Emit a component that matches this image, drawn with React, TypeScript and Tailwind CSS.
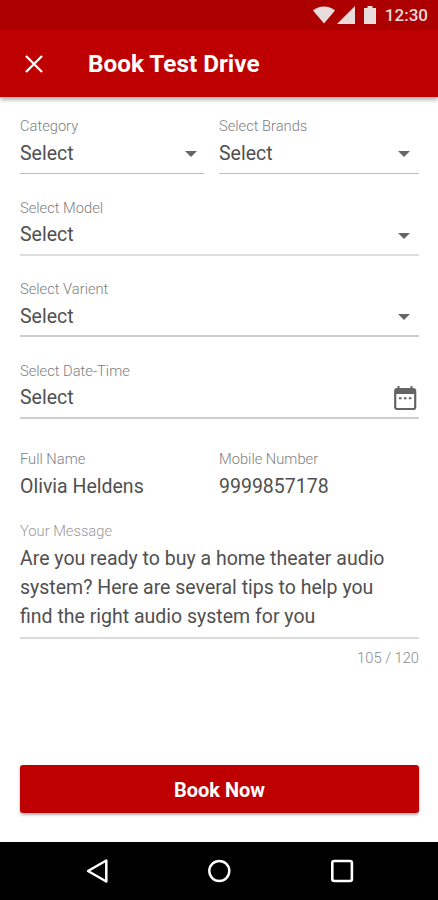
import React from 'react'

type FieldProps = {
  label: string
  value: string
  icon?: React.ReactNode
  lineClass?: string
}

const DropIcon = ({ className = 'mr-[9px]' }: { className?: string }) => (
  <svg width="12" height="6" viewBox="0 0 12 6" className={`mt-px ${className}`} fill="#666666">
    <path d="M0 0h12L6 6z" />
  </svg>
)

const CalendarIcon = () => (
  <svg width="24" height="26" viewBox="0 0 24 26" className="mr-[2px]" fill="none">
    <rect x="2.2" y="4.2" width="20" height="19.8" rx="2" stroke="#646464" strokeWidth="2.2" />
    <path d="M2 4h20v5H2z" fill="#646464" />
    <path d="M5.5 1v4M18.5 1v4" stroke="#646464" strokeWidth="2" />
    <path d="M6 13.3h2.6M10.9 13.3h2.6M15.8 13.3h2.6" stroke="#646464" strokeWidth="2" />
  </svg>
)

const Field = ({ label, value, icon, lineClass = 'h-[1.5px] bg-[#bdbdbd]' }: FieldProps) => (
  <div className="flex h-[58px] flex-col">
    <span className="h-5 text-[14.7px] leading-5 font-light text-[#808080]">{label}</span>
    <div className="flex h-9 items-center justify-between">
      <span className="text-[19.5px] leading-7 text-[#505050]">{value}</span>
      {icon}
    </div>
    <div className={`mt-px shrink-0 ${lineClass}`} />
  </div>
)

const StatusBar = () => (
  <div className="flex h-[30px] items-center justify-end bg-[#ac0000] pr-[10px] text-[#e8dcdc]">
    <svg width="22" height="18" viewBox="0 0 22 18" fill="currentColor">
      <path d="M0 4.5C6 -.7 16 -.7 22 4.5L11 17.5z" />
    </svg>
    <svg width="18" height="18" viewBox="0 0 18 18" className="ml-[2px]" fill="currentColor">
      <path d="M0 18L18 0v18z" />
    </svg>
    <svg width="12" height="18" viewBox="0 0 12 18" className="ml-[9px]" fill="currentColor">
      <path d="M3.5 0h5v2H12v16H0V2h3.5z" />
    </svg>
    <span className="ml-[9px] text-[17px] leading-5 font-medium">12:30</span>
  </div>
)

const AppBar = () => (
  <div className="flex h-[67px] items-center bg-[#bf0000] pl-[25px] text-white shadow-[0_3px_4px_rgba(0,0,0,0.3)]">
    <button className="flex items-center justify-center">
      <svg width="18" height="18" viewBox="0 0 18 18" fill="none" stroke="currentColor" strokeWidth="2.3">
        <path d="M1 1l16 16M17 1L1 17" />
      </svg>
    </button>
    <h1 className="ml-[45px] text-[24.3px] leading-8 font-bold">Book Test Drive</h1>
  </div>
)

const NavigationBar = () => (
  <div className="flex h-[58px] items-center bg-black pl-[85px] text-white">
    <svg width="24" height="26" viewBox="0 0 24 26" fill="none" stroke="currentColor" strokeWidth="2.5" strokeLinejoin="round">
      <path d="M21.3 2.5v21L3 13z" />
    </svg>
    <svg width="24" height="24" viewBox="0 0 24 24" className="ml-[98px]" fill="none" stroke="currentColor" strokeWidth="2.4">
      <circle cx="12.3" cy="12" r="10" />
    </svg>
    <svg width="24" height="24" viewBox="0 0 24 24" className="ml-[99px]" fill="none" stroke="currentColor" strokeWidth="2.6">
      <rect x="2.3" y="2" width="19.6" height="20" rx="2" />
    </svg>
  </div>
)

const App = () => {
  return (
    <div className="flex h-[900px] w-[438px] flex-col overflow-hidden bg-white font-['Roboto',sans-serif]">
      <StatusBar />
      <AppBar />
      <div className="flex flex-1 flex-col pt-[19px] pr-[19px] pl-5">
        <div className="flex flex-col gap-[23.5px]">
          <div className="grid grid-cols-[184px_200px] gap-[15px]">
            <Field label="Category" value="Select" icon={<DropIcon className="mr-[7px]" />} />
            <Field label="Select Brands" value="Select" icon={<DropIcon />} />
          </div>
          <Field label="Select Model" value="Select" icon={<DropIcon />} lineClass="h-[2px] bg-[#dedede]" />
          <Field label="Select Varient" value="Select" icon={<DropIcon />} lineClass="h-[2px] bg-[#cecece]" />
          <Field label="Select Date-Time" value="Select" icon={<CalendarIcon />} lineClass="h-[2px] bg-[#cecece]" />
        </div>
        <div className="mt-[30.5px] grid grid-cols-[184px_200px] gap-[15px]">
          <Field label="Full Name" value="Olivia Heldens" lineClass="bg-transparent" />
          <Field label="Mobile Number" value="9999857178" lineClass="bg-transparent" />
        </div>
        <div className="mt-[14px] flex flex-col">
          <span className="h-5 text-[14.7px] leading-5 font-light text-[#999999]">Your Message</span>
          <p className="mt-[3px] text-[19.5px] leading-[29px] text-[#505050]">
            Are you ready to buy a home theater audio
            <br />
            system? Here are several tips to help you
            <br />
            find the right audio system for you
          </p>
          <div className="mt-[6px] h-[2px] bg-[#dadcda]" />
          <span className="mt-[9px] self-end text-[14.7px] leading-5 font-light text-[#8c8c8c]">105 / 120</span>
        </div>
        <button className="mt-auto mb-[29.5px] h-12 rounded-[3px] bg-[#bf0000] pt-[2px] text-[20px] leading-7 font-bold text-white shadow-[0_2px_3px_rgba(0,0,0,0.3)]">
          Book Now
        </button>
      </div>
      <NavigationBar />
    </div>
  )
}

export default App
